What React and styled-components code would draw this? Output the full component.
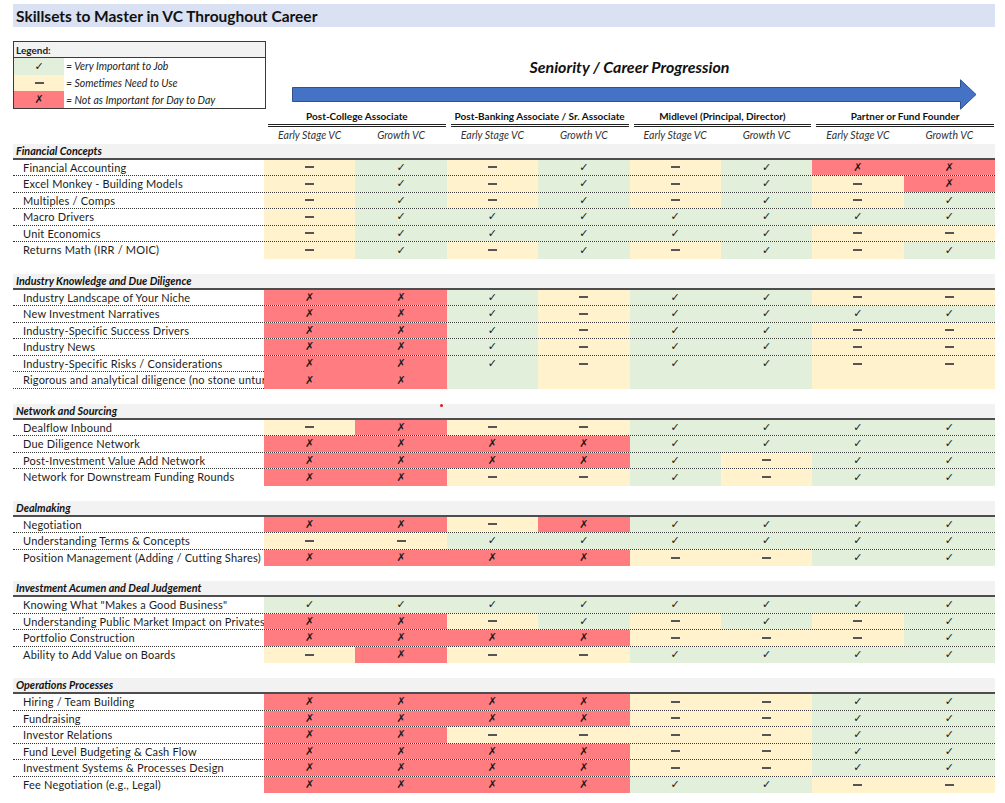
import React from 'react';
import styled, { createGlobalStyle } from 'styled-components';

const GlobalStyle = createGlobalStyle`
  body {
    margin: 0;
    background: #fff;
    font-family: Lato, "Liberation Sans", sans-serif;
    color: #1c1c1c;
  }
`;

const BG = { G: '#E2EFDA', Y: '#FFF2CC', R: '#FF7C80' };
const COLS = '251px repeat(8, 1fr)';

const GROUPS = [
  'Post-College Associate',
  'Post-Banking Associate / Sr. Associate',
  'Midlevel (Principal, Director)',
  'Partner or Fund Founder',
];

const SECTIONS = [
  { title: 'Financial Concepts', rows: [
    ['Financial Accounting', 'YGYGYGRR'],
    ['Excel Monkey - Building Models', 'YGYGYGYR'],
    ['Multiples / Comps', 'YGYGYGYG'],
    ['Macro Drivers', 'YGGGGGGG'],
    ['Unit Economics', 'YGGGGGYY'],
    ['Returns Math (IRR / MOIC)', 'YGYGYGYG'],
  ] },
  { title: 'Industry Knowledge and Due Diligence', rows: [
    ['Industry Landscape of Your Niche', 'RRGYGGYY'],
    ['New Investment Narratives', 'RRGYGGGG'],
    ['Industry-Specific Success Drivers', 'RRGYGGYY'],
    ['Industry News', 'RRGYGGYY'],
    ['Industry-Specific Risks / Considerations', 'RRGYGGYY', 'label'],
    ['Rigorous and analytical diligence (no stone unturned)', 'RRgyggyy', 'label'],
  ] },
  { title: 'Network and Sourcing', note: true, rows: [
    ['Dealflow Inbound', 'YRYYGGGG'],
    ['Due Diligence Network', 'RRRRGGGG'],
    ['Post-Investment Value Add Network', 'RRRRGYGG'],
    ['Network for Downstream Funding Rounds', 'RRYYGYGG'],
  ] },
  { title: 'Dealmaking', rows: [
    ['Negotiation', 'RRYRGGGG'],
    ['Understanding Terms & Concepts', 'YYGGGGGG'],
    ['Position Management (Adding / Cutting Shares)', 'RRRRYYGG'],
  ] },
  { title: 'Investment Acumen and Deal Judgement', rows: [
    ['Knowing What "Makes a Good Business"', 'GGGGGGGG'],
    ['Understanding Public Market Impact on Privates', 'RRYGYGYG'],
    ['Portfolio Construction', 'RRRRYYYG'],
    ['Ability to Add Value on Boards', 'YRYYGGGG'],
  ] },
  { title: 'Operations Processes', rows: [
    ['Hiring / Team Building', 'RRRRYYGG'],
    ['Fundraising', 'RRRRYYGG'],
    ['Investor Relations', 'RRYYYYGG'],
    ['Fund Level Budgeting & Cash Flow', 'RRRRYYGG'],
    ['Investment Systems & Processes Design', 'RRRRYYGG'],
    ['Fee Negotiation (e.g., Legal)', 'RRRRGGYY'],
  ] },
];

// symbol for a rating; lowercase code = coloured cell with no mark
const Mark = ({ code }) => {
  if (code === 'G') return <Glyph>✓</Glyph>;
  if (code === 'R') return <Glyph $x>✗</Glyph>;
  if (code === 'Y') return <Dash />;
  return null;
};

const App = () => (
  <>
    <GlobalStyle />
    <Page>
      <TitleBar>Skillsets to Master in VC Throughout Career</TitleBar>

      <Top>
        <Legend>
          <LegendHead>Legend:</LegendHead>
          <LegendSwatch $level="G"><Mark code="G" /></LegendSwatch>
          <LegendText>= Very Important to Job</LegendText>
          <LegendSwatch $level="Y"><Mark code="Y" /></LegendSwatch>
          <LegendText>= Sometimes Need to Use</LegendText>
          <LegendSwatch $level="R"><Mark code="R" /></LegendSwatch>
          <LegendText>= Not as Important for Day to Day</LegendText>
        </Legend>
        <Progress>
          <ProgressTitle>Seniority / Career Progression</ProgressTitle>
          <ArrowWrap>
            <svg width="685" height="31" viewBox="0 0 685 31">
              <path d="M0.5 8.5 H668.5 V0.8 L684 15.5 L668.5 30.2 V22.5 H0.5 Z" fill="#4472C4" stroke="#2F528F" strokeWidth="1" />
            </svg>
          </ArrowWrap>
        </Progress>
      </Top>

      <GroupRow>
        <span />
        {GROUPS.map(g => <GroupHead key={g}>{g}</GroupHead>)}
      </GroupRow>
      <SubRow>
        <span />
        {GROUPS.map(g => (
          <React.Fragment key={g}>
            <SubHead>Early Stage VC</SubHead>
            <SubHead>Growth VC</SubHead>
          </React.Fragment>
        ))}
      </SubRow>

      {SECTIONS.map((s, si) => (
        <Section key={s.title} $first={si === 0}>
          <SectionHead>
            {s.title}
            {s.note && <NoteDot />}
          </SectionHead>
          {s.rows.map(([label, codes, line], ri) => {
            const last = ri === s.rows.length - 1;
            const mode = line || (last ? 'none' : 'full');
            return (
              <Row key={label} $line={mode === 'full'}>
                <Label $line={mode === 'label'}>{label}</Label>
                {codes.split('').map((c, i) => (
                  <Cell key={i} $level={c.toUpperCase()}>
                    <Mark code={c} />
                  </Cell>
                ))}
              </Row>
            );
          })}
        </Section>
      ))}
    </Page>
  </>
);

export default App;

// --- styles ---
const Page = styled.div` width: 982px; padding: 4px 0 0 13px; `;
const TitleBar = styled.div` height: 23px; background: #D9E1F2; display: flex; align-items: center; padding-left: 3px; font-size: 15.5px; font-weight: 700; color: #111; `;

const Top = styled.div` display: grid; grid-template-columns: 251px 1fr; margin-top: 14px; height: 68px; `;
const Legend = styled.div` width: 253px; height: 68px; box-sizing: border-box; border: 1px solid #3a3a3a; display: grid; grid-template-columns: 50px 1fr; grid-template-rows: 16px repeat(3, 1fr); `;
const LegendHead = styled.div` grid-column: 1 / -1; background: #F2F2F2; border-bottom: 1px solid #3a3a3a; font-weight: 700; font-size: 10px; padding-left: 2px; display: flex; align-items: center; `;
const LegendSwatch = styled.div` background: ${p => BG[p.$level]}; display: flex; align-items: center; justify-content: center; `;
const LegendText = styled.div` font-style: italic; font-size: 10.5px; padding-left: 2px; display: flex; align-items: center; color: #222; `;

const Progress = styled.div` display: flex; flex-direction: column; `;
const ProgressTitle = styled.div` text-align: center; font-weight: 700; font-style: italic; font-size: 16px; line-height: 18px; margin-top: 17px; color: #111; `;
const ArrowWrap = styled.div` margin: 3px 0 0 28px; height: 31px; svg { display: block; } `;

const GroupRow = styled.div` display: grid; grid-template-columns: ${COLS}; height: 19px; `;
const GroupHead = styled.div` grid-column: span 2; margin: 0 1px 0 4px; height: 15px; line-height: 15px; border-bottom: 3px double #222; text-align: center; white-space: nowrap; font-weight: 700; font-size: 10px; color: #111; `;
const SubRow = styled.div` display: grid; grid-template-columns: ${COLS}; height: 15.5px; `;
const SubHead = styled.div` text-align: center; font-style: italic; font-size: 10.5px; line-height: 15.5px; color: #333; `;

const Section = styled.div` margin-top: ${p => (p.$first ? '0' : '15px')}; `;
const SectionHead = styled.div` position: relative; height: 16px; box-sizing: border-box; background: #F2F2F2; border-bottom: 2px solid #4d4d4d; padding-left: 3px; font-weight: 700; font-style: italic; font-size: 10.8px; line-height: 14px; color: #111; `;
const NoteDot = styled.span` position: absolute; left: 427px; top: 0; width: 3px; height: 3px; border-radius: 50%; background: #e31919; `;

const Row = styled.div` display: grid; grid-template-columns: ${COLS}; height: 16.5px; box-sizing: border-box; border-bottom: ${p => (p.$line ? '1px dotted #333' : 'none')}; `;
const Label = styled.div` padding-left: 10px; font-size: 11px; letter-spacing: 0.2px; line-height: 15.5px; white-space: nowrap; overflow: hidden; color: #1c1c1c; box-sizing: border-box; border-bottom: ${p => (p.$line ? '1px dotted #333' : 'none')}; `;
const Cell = styled.div` background: ${p => BG[p.$level]}; display: flex; align-items: center; justify-content: center; `;
const Glyph = styled.span` font-family: "DejaVu Sans", sans-serif; font-size: 11px; font-weight: ${p => (p.$x ? 700 : 400)}; line-height: 1; color: #1a1a1a; font-style: ${p => (p.$x ? 'italic' : 'normal')}; `;
const Dash = styled.span` display: inline-block; width: 9px; height: 2px; background: #555; `;
